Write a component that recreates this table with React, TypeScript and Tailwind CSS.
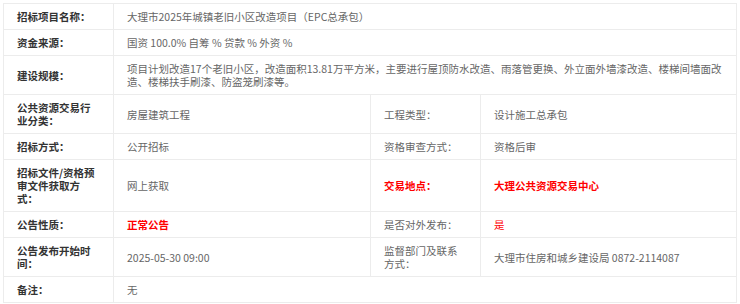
const rows: { cells: { text: string; kind?: "label" | "label2" | "value"; red?: boolean; bold?: boolean; span?: number }[] }[] = [
  { cells: [{ text: "招标项目名称：", kind: "label" }, { text: "大理市2025年城镇老旧小区改造项目（EPC总承包）", span: 3 }] },
  { cells: [{ text: "资金来源：", kind: "label" }, { text: "国资 100.0% 自筹 % 贷款 % 外资 %", span: 3 }] },
  {
    cells: [
      { text: "建设规模：", kind: "label" },
      {
        text: "项目计划改造17个老旧小区，改造面积13.81万平方米，主要进行屋顶防水改造、雨落管更换、外立面外墙漆改造、楼梯间墙面改造、楼梯扶手刷漆、防盗笼刷漆等。",
        span: 3,
      },
    ],
  },
  {
    cells: [
      { text: "公共资源交易行业分类：", kind: "label" },
      { text: "房屋建筑工程" },
      { text: "工程类型：", kind: "label2" },
      { text: "设计施工总承包" },
    ],
  },
  {
    cells: [
      { text: "招标方式：", kind: "label" },
      { text: "公开招标" },
      { text: "资格审查方式：", kind: "label2" },
      { text: "资格后审" },
    ],
  },
  {
    cells: [
      { text: "招标文件/资格预审文件获取方式：", kind: "label" },
      { text: "网上获取" },
      { text: "交易地点：", kind: "label2", red: true, bold: true },
      { text: "大理公共资源交易中心", red: true, bold: true },
    ],
  },
  {
    cells: [
      { text: "公告性质：", kind: "label" },
      { text: "正常公告", red: true, bold: true },
      { text: "是否对外发布：", kind: "label2" },
      { text: "是", red: true },
    ],
  },
  {
    cells: [
      { text: "公告发布开始时间：", kind: "label" },
      { text: "2025-05-30 09:00" },
      { text: "监督部门及联系方式：", kind: "label2" },
      { text: "大理市住房和城乡建设局 0872-2114087" },
    ],
  },
  { cells: [{ text: "备注：", kind: "label" }, { text: "无", span: 3 }] },
];

export default function App() {
  return (
    <div className="w-[740px] h-[304px] bg-white pt-[3px] pl-[3px]">
      <table
        className="table-fixed border-collapse w-[733px] text-[10.5px] leading-[13px] text-[#666]"
        style={{ fontFamily: '"Noto Sans CJK SC", "Noto Sans", sans-serif' }}
      >
        <colgroup>
          <col className="w-[110px]" />
          <col className="w-[257px]" />
          <col className="w-[110px]" />
          <col className="w-[256px]" />
        </colgroup>
        <tbody>
          {rows.map((r, i) => (
            <tr key={i}>
              {r.cells.map((c, j) => {
                let cls = "border border-[#ececec] px-[13px] py-[6px] align-middle text-left";
                if (c.kind === "label") cls += " font-bold text-[#333]";
                if (c.red) cls += " text-[#ff0000]";
                if (c.bold) cls += " font-bold";
                return (
                  <td key={j} colSpan={c.span} className={cls}>
                    {c.text}
                  </td>
                );
              })}
            </tr>
          ))}
        </tbody>
      </table>
    </div>
  );
}
